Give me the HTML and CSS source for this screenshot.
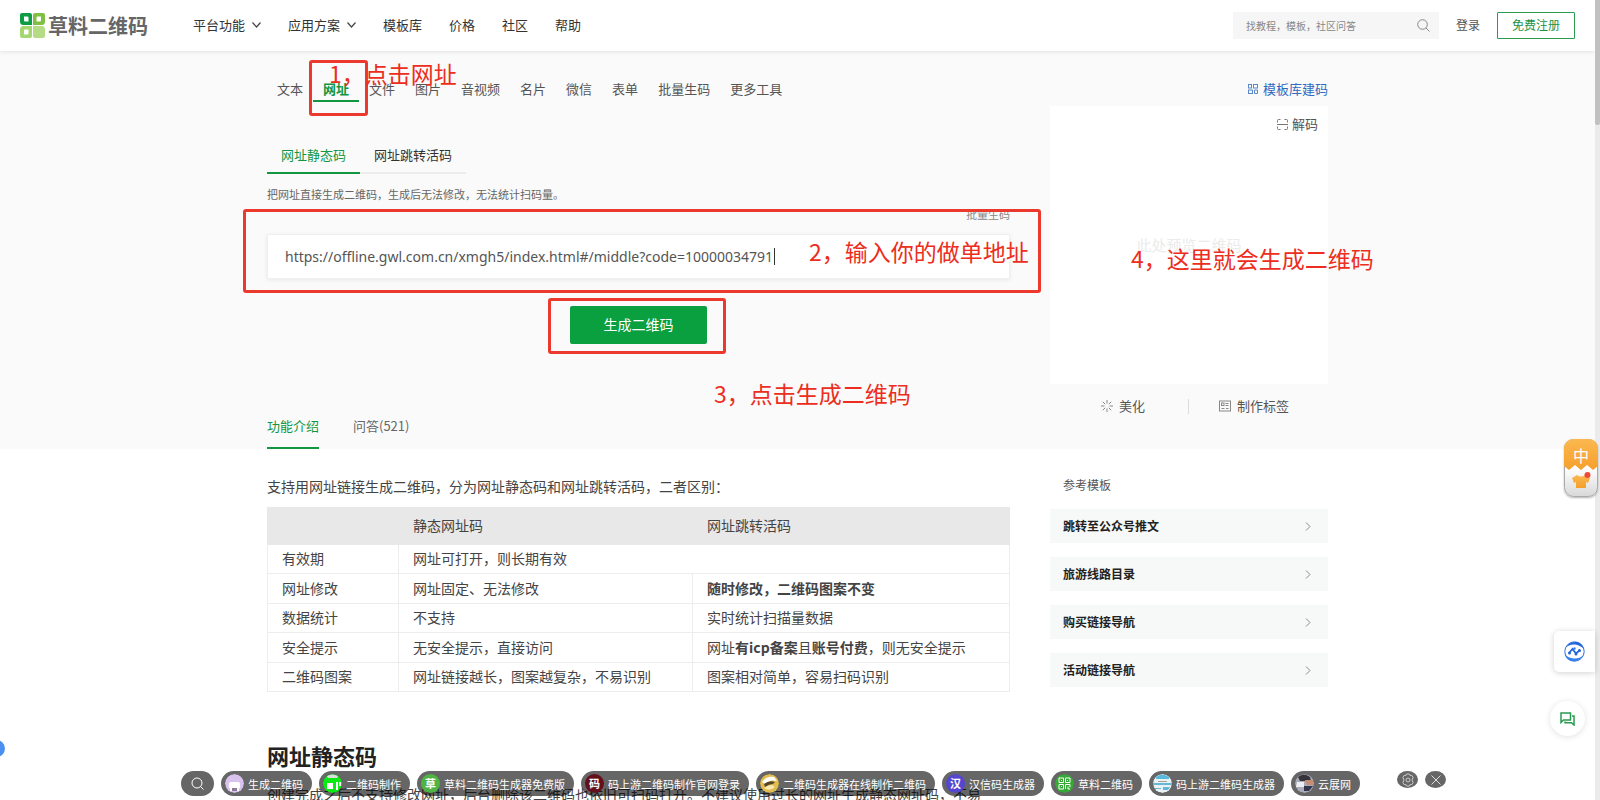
FILE: index.html
```html
<!DOCTYPE html>
<html lang="zh-CN">
<head>
<meta charset="utf-8">
<title>草料二维码</title>
<link rel="stylesheet" href="styles.css">
</head>
<body>
<header class="topbar">
  <a class="logo" href="#">
    <svg width="25" height="25" viewBox="0 0 25 25" aria-hidden="true">
      <path d="M2 0h8a2 2 0 0 1 2 2v10H3.500A3.500 3.500 0 0 1 0 8.500V2a2 2 0 0 1 2-2zM4 3.500v4a1 1 0 0 0 1 1h3.500v-4a1 1 0 0 0-1-1z" fill="#0c9c43" fill-rule="evenodd"/>
      <path d="M15 0h8a2 2 0 0 1 2 2v6.500a3.500 3.500 0 0 1-3.500 3.500H13V2a2 2 0 0 1 2-2zM17.500 3.500a1 1 0 0 0-1 1v4H20a1 1 0 0 0 1-1v-4z" fill="#7fbf42" fill-rule="evenodd"/>
      <path d="M3.500 13H12v10a2 2 0 0 1-2 2H2a2 2 0 0 1-2-2v-6.500A3.500 3.500 0 0 1 3.500 13zM5 16.500a1 1 0 0 0-1 1v4h3.500a1 1 0 0 0 1-1v-4z" fill="#a5d672" fill-rule="evenodd"/>
      <path d="M13 13h8.500a3.500 3.500 0 0 1 3.500 3.500V23a2 2 0 0 1-2 2h-8a2 2 0 0 1-2-2z" fill="#b5dc85"/>
    </svg>
    <span>草料二维码</span>
  </a>
  <nav class="mainnav">
    <a href="#">平台功能<svg width="9" height="6" viewBox="0 0 9 6"><path d="M.5.5l4 4.500 4-4.500" fill="none" stroke="#444" stroke-width="1.200"/></svg></a>
    <a href="#">应用方案<svg width="9" height="6" viewBox="0 0 9 6"><path d="M.5.5l4 4.500 4-4.500" fill="none" stroke="#444" stroke-width="1.200"/></svg></a>
    <a href="#">模板库</a>
    <a href="#">价格</a>
    <a href="#">社区</a>
    <a href="#">帮助</a>
  </nav>
  <div class="search">
    <input type="text" placeholder="找教程，模板，社区问答" aria-label="搜索">
    <svg width="13" height="13" viewBox="0 0 13 13"><circle cx="5.500" cy="5.500" r="4.800" fill="none" stroke="#888"/><path d="M9 9l3.500 3.500" stroke="#888"/></svg>
  </div>
  <a class="login" href="#">登录</a>
  <button class="register" type="button">免费注册</button>
</header>

<main>
  <section class="hero">
    <div class="wrap">
      <div class="left">
        <nav class="tabs">
          <a href="#">文本</a><a class="on" href="#">网址</a><a href="#">文件</a><a href="#">图片</a><a href="#">音视频</a><a href="#">名片</a><a href="#">微信</a><a href="#">表单</a><a href="#">批量生码</a><a href="#">更多工具</a>
        </nav>
        <nav class="subtabs">
          <a class="on" href="#">网址静态码</a><a href="#">网址跳转活码</a>
        </nav>
        <p class="hint">把网址直接生成二维码，生成后无法修改，无法统计扫码量。</p>
        <a class="batch" href="#">批量生码</a>
        <div class="urlbox">
          <input type="text" aria-label="网址" value="https://offline.gwl.com.cn/xmgh5/index.html#/middle?code=10000034791">
          <span class="caret"></span>
        </div>
        <button class="generate" type="button">生成二维码</button>
        <nav class="infotabs">
          <a class="on" href="#">功能介绍</a><a href="#">问答(521)</a>
        </nav>
      </div>
      <aside class="right">
        <a class="tpl" href="#">
          <svg width="10" height="10" viewBox="0 0 10 10" fill="none" stroke="#5c88c8"><rect x=".5" y=".5" width="3" height="3.500"/><rect x="5.500" y=".5" width="4" height="3.500"/><rect x=".5" y="6" width="4" height="3.500"/><path d="M6.500 6h3v3.500h-3z"/></svg>
          模板库建码
        </a>
        <div class="preview">
          <a class="decode" href="#">
            <svg width="11" height="11" viewBox="0 0 11 11" fill="none" stroke="#777"><path d="M3.500.5h-2a1 1 0 0 0-1 1v2M7.500.5h2a1 1 0 0 1 1 1v2M3.500 10.500h-2a1 1 0 0 1-1-1v-2M7.500 10.500h2a1 1 0 0 0 1-1v-2M0 5.500h11"/></svg>
            解码
          </a>
          <span class="ghost">此处预览二维码</span>
        </div>
        <div class="actions">
          <a href="#"><svg width="12" height="12" viewBox="0 0 12 12" stroke="#888"><path d="M6 0v3.500M6 8.500V12M0 6h3.500M8.500 6H12M1.800 1.800l2.400 2.400M7.800 7.800l2.400 2.400M10.200 1.800L7.800 4.200M4.200 7.800l-2.400 2.400"/></svg>美化</a>
          <span class="divider"></span>
          <a href="#"><svg width="12" height="12" viewBox="0 0 12 12" fill="none" stroke="#888"><rect x=".5" y="1" width="11" height="10"/><rect x="2.500" y="3" width="2.500" height="2.500"/><path d="M6.500 3.500h3M6.500 5.500h3M2.500 8.500h3M7 8.500h2.500"/></svg>制作标签</a>
        </div>
      </aside>

      <div class="mark mark-tab"></div>
      <div class="mark mark-url"></div>
      <div class="mark mark-btn"></div>
      <span class="note note-1">1，点击网址</span>
      <span class="note note-2">2，输入你的做单地址</span>
      <span class="note note-3">3，点击生成二维码</span>
      <span class="note note-4">4，这里就会生成二维码</span>
    </div>
  </section>

  <section class="wrap details">
    <div class="left">
      <p class="intro">支持用网址链接生成二维码，分为网址静态码和网址跳转活码，二者区别：</p>
      <table>
        <thead><tr><th></th><th>静态网址码</th><th>网址跳转活码</th></tr></thead>
        <tbody>
          <tr><td>有效期</td><td colspan="2">网址可打开，则长期有效</td></tr>
          <tr><td>网址修改</td><td>网址固定、无法修改</td><td><b>随时修改，二维码图案不变</b></td></tr>
          <tr><td>数据统计</td><td>不支持</td><td>实时统计扫描量数据</td></tr>
          <tr><td>安全提示</td><td>无安全提示，直接访问</td><td>网址<b>有icp备案</b>且<b>账号付费</b>，则无安全提示</td></tr>
          <tr><td>二维码图案</td><td>网址链接越长，图案越复杂，不易识别</td><td>图案相对简单，容易扫码识别</td></tr>
        </tbody>
      </table>
      <h2>网址静态码</h2>
      <p class="body">创建完成之后不支持修改网址，后台删除该二维码也依旧可扫码打开。不建议使用过长的网址生成静态网址码，不易</p>
    </div>
    <aside class="right refs">
      <h3>参考模板</h3>
      <a href="#">跳转至公众号推文<svg width="6" height="9" viewBox="0 0 6 9"><path d="M1 .5l4 4-4 4" fill="none" stroke="#888"/></svg></a>
      <a href="#">旅游线路目录<svg width="6" height="9" viewBox="0 0 6 9"><path d="M1 .5l4 4-4 4" fill="none" stroke="#888"/></svg></a>
      <a href="#">购买链接导航<svg width="6" height="9" viewBox="0 0 6 9"><path d="M1 .5l4 4-4 4" fill="none" stroke="#888"/></svg></a>
      <a href="#">活动链接导航<svg width="6" height="9" viewBox="0 0 6 9"><path d="M1 .5l4 4-4 4" fill="none" stroke="#888"/></svg></a>
    </aside>
  </section>
</main>

<div class="dock">
  <button class="find" type="button" aria-label="搜索"><svg width="13" height="13" viewBox="0 0 13 13" fill="none" stroke="#fff"><circle cx="6" cy="6" r="5"/><path d="M9.500 9.500l3 3"/></svg></button>
  <a href="#"><svg class="ico" viewBox="0 0 19 19"><circle cx="9.500" cy="9.500" r="9.500" fill="#d9c3ee"/><path d="M4 10q0-2 2-2h7q2 0 2 2v4H4z" fill="#fff"/><path d="M5 14h3v3H5zM11 14h3v3h-3z" fill="#fff"/><path d="M7 14h5v3H7z" fill="#8d7a9b"/></svg>生成二维码</a>
  <a href="#"><svg class="ico" viewBox="0 0 19 19"><circle cx="9.500" cy="9.500" r="9.500" fill="#0bea12"/><path d="M4 2Q9-1 15 2l-1 2H5z" fill="#ddd"/><path d="M4 9h6v6H4zM13 8h2v8h-2zM16 8h2v4h-2z" fill="#fff"/></svg>二维码制作</a>
  <a href="#"><span class="ico green">草</span>草料二维码生成器免费版</a>
  <a href="#"><span class="ico wine">码</span>码上游二维码制作官网登录</a>
  <a href="#"><svg class="ico" viewBox="0 0 19 19"><circle cx="9.500" cy="9.500" r="9.500" fill="#e2bd4d"/><path d="M2 8q4-6 12-5l3 4q-7-2-12 3z" fill="#fff"/><path d="M4 10q5-4 11-2l-2 2q-4 0-8 3z" fill="#54452a"/><path d="M4 14q5 4 11-1l-3-2q-4 0-8 3z" fill="#f6e9b4"/></svg>二维码生成器在线制作二维码</a>
  <a href="#"><span class="ico violet">汉</span>汉信码生成器</a>
  <a href="#"><svg class="ico" viewBox="0 0 19 19"><circle cx="9.500" cy="9.500" r="9.500" fill="#36a936"/><path d="M4 4h4.500v4.500H4zM10.500 4H15v4.500h-4.500zM4 10.500h4.500V15H4zM10.500 15v-4.500H15V13M13 12.500V15h2" fill="none" stroke="#fff"/><path d="M6 6h1v1H6zM12 6h1v1h-1zM6 12h1v1H6z" fill="#fff"/></svg>草料二维码</a>
  <a href="#"><svg class="ico" viewBox="0 0 19 19"><circle cx="9.500" cy="9.500" r="9.500" fill="#e9f2f5"/><path d="M3 3q6-5 13 0v2H3z" fill="#59b8dc"/><path d="M0 9h19v2H0zM2 14h6v1H2zM10 13h7l-2 3h-5z" fill="#66b7d5"/><path d="M5 7h9v1H5z" fill="#a9a28f"/></svg>码上游二维码生成器</a>
  <a href="#"><svg class="ico" viewBox="0 0 19 19"><circle cx="9.500" cy="9.500" r="9.500" fill="#a9abb8"/><path d="M3 3q6-5 12 0l1 4H5z" fill="#37333a"/><path d="M10 6h8v5h-6z" fill="#c58d73"/><path d="M2 8h7v5H1z" fill="#eceef4"/><path d="M9 12h9l-4 5H9z" fill="#35364d"/></svg>云展网</a>
</div>
<div class="dock-tools">
  <button type="button" aria-label="设置"><svg width="14" height="14" viewBox="0 0 14 14" fill="none" stroke="#ccc"><path d="M5.500 1h3l.6 1.600 1.700-.3 1.500 2.500L11.200 6v2l1.100 1.200-1.500 2.500-1.700-.3-.6 1.600h-3l-.6-1.600-1.700.3-1.500-2.500L2.800 8V6L1.700 4.800l1.500-2.500 1.700.3z"/><circle cx="7" cy="7" r="2"/></svg></button>
  <button type="button" aria-label="关闭"><svg width="12" height="12" viewBox="0 0 12 12" stroke="#ddd"><path d="M1.500 1.500l9 9M10.500 1.500l-9 9"/></svg></button>
</div>

<span class="edge-dot"></span>
<div class="scrollbar"><span></span></div>
<div class="assist">
  <svg width="21" height="21" viewBox="0 0 21 21"><circle cx="10.500" cy="10.500" r="9.700" fill="#fff" stroke="#2b6fe0"/><path d="M1.500 7Q5 0 13 1q5 1 7 7-4-4-9-4.500Q5 3 1.500 7z" fill="#2467dc"/><path d="M19.500 14q-4 7-12 6-5-1-7-7 4 4 9 4.500 6 .5 10-3.500z" fill="#3480ee"/><path d="M5 12l3.500-4 3.500 4.500 4-3.500" fill="none" stroke="#2467dc" stroke-width="1.800"/><circle cx="5.500" cy="12" r="1.500" fill="#2467dc"/><circle cx="12" cy="13" r="1.500" fill="#2467dc"/><circle cx="15.500" cy="9.500" r="1.500" fill="#2467dc"/><circle cx="10.500" cy="7.500" r="1.200" fill="#3480ee"/></svg>
</div>
<button class="chat" type="button" aria-label="在线咨询">
  <svg width="15" height="14" viewBox="0 0 15 14" fill="none" stroke="#2a9a50" stroke-width="1.500"><path d="M1 1h9.500v7H3.500L1 10.500z"/><path d="M12 4h2v9l-2.500-2.200H5V9.500"/></svg>
</button>
<div class="ime">
  <svg width="34" height="58" viewBox="0 0 34 58"><defs><linearGradient id="o" x1="0" y1="0" x2="0" y2="1"><stop offset="0" stop-color="#fbb850"/><stop offset="1" stop-color="#f5a02c"/></linearGradient><linearGradient id="g" x1="0" y1="0" x2="0" y2="1"><stop offset=".5" stop-color="#fff"/><stop offset="1" stop-color="#d8d8d8"/></linearGradient></defs><rect x=".5" y=".5" width="33" height="57" rx="9" fill="url(#g)" stroke="#aaa"/><path d="M0 27V9a9 9 0 0 1 9-9h16a9 9 0 0 1 9 9v18l-5 4-6-5-6 5-6-5-6 5z" fill="url(#o)"/><path d="M13 36q4 3 8 0l5 3-2 5-2-1v6H12v-6l-2 1-2-5z" fill="url(#o)"/><circle cx="23.500" cy="36" r="3" fill="#ee4a3c"/></svg>
  <span>中</span>
</div>
</body>
</html>
```
FILE: styles.css
```css
* { box-sizing: border-box; }
html, body { height: 100%; }
body {
  margin: 0;
  padding-right: 5px;
  overflow: hidden;
  position: relative;
  background: #fff;
  color: #444;
  font: 13px/20px "Noto Sans CJK SC", sans-serif;
}
a { color: inherit; text-decoration: none; }
p, h2, h3 { margin: 0; }
button, input { font-family: inherit; }
button { padding: 0; border: 0; cursor: pointer; }
svg { flex: none; }

/* Header */
.topbar {
  position: relative;
  display: flex;
  align-items: center;
  height: 51px;
  padding: 0 20px;
  background: #fff;
  box-shadow: 0 1px 4px rgba(0, 0, 0, .1);
}
.logo { display: flex; align-items: center; gap: 3px; color: #666; font-size: 20px; font-weight: 700; }
.mainnav { display: flex; gap: 27px; margin-left: 45px; padding-bottom: 2px; color: #333; }
.mainnav a { display: flex; align-items: center; gap: 7px; }
.search {
  display: flex;
  align-items: center;
  width: 206px;
  height: 27px;
  margin-left: auto;
  padding: 0 9px 0 13px;
  background: #f6f6f6;
}
.search input { flex: 1; min-width: 0; padding: 0; border: 0; background: none; font-size: 10px; outline: 0; }
.search input::placeholder { color: #888; }
.login { margin: 0 17px; padding-bottom: 2px; font-size: 12px; color: #555; }
.register { width: 78px; height: 27px; padding-bottom: 2px; border: 1px solid #2a9a50; border-radius: 1px; background: #fff; color: #1b9345; font-size: 12px; }

/* Shared columns */
.wrap { position: relative; display: flex; gap: 40px; max-width: 1061px; margin: 0 auto; }
.left { flex: 1; min-width: 0; }
.right { flex: 0 0 278px; }

/* Generator */
.hero { background: #fafafa; }
.hero .wrap { padding-top: 28px; }
.tabs, .subtabs, .infotabs { display: flex; }
.tabs a { padding: 0 10px 1px; border-bottom: 2px solid transparent; color: #555; }
.tabs .on { color: #12963f; border-color: #12963f; font-weight: 700; }
.subtabs { margin-top: 37px; }
.subtabs a { padding: 0 14px 2px; line-height: 31px; border-bottom: 2px solid #ececec; color: #333; }
.subtabs .on { color: #12963f; border-color: #12963f; }
.hint { margin-top: 12px; font-size: 11px; line-height: 16px; color: #666; }
.batch { display: block; width: fit-content; margin: 4px 0 0 auto; font-size: 11px; line-height: 16px; color: #888; }
.urlbox { position: relative; margin-top: 12px; }
.urlbox input {
  display: block;
  width: 100%;
  height: 45px;
  padding: 0 17px;
  border: 1px solid #f0f0f0;
  background: #fff;
  box-shadow: 0 1px 4px rgba(0, 0, 0, .08);
  color: #555;
  font: 14px "Noto Sans", sans-serif;
  outline: 0;
}
.caret { position: absolute; left: 507px; top: 14px; width: 1px; height: 17px; background: #333; }
.generate { display: block; width: 137px; height: 38px; margin: 27px auto 0; padding-bottom: 2px; border-radius: 2px; background: #0aa03f; color: #fff; font-size: 14px; }
.infotabs { gap: 34px; margin-top: 72px; color: #666; }
.infotabs a { padding-bottom: 11px; border-bottom: 2px solid transparent; }
.infotabs .on { color: #12963f; border-color: #12963f; }

.tpl { display: flex; align-items: center; justify-content: flex-end; gap: 5px; color: #2f6bc0; }
.preview { position: relative; height: 278px; margin-top: 7px; padding: 8px 10px; background: #fff; border-radius: 2px; }
.decode { display: flex; align-items: center; justify-content: flex-end; gap: 4px; color: #555; }
.ghost { position: absolute; top: 129px; left: 0; right: 0; text-align: center; font-size: 15px; color: #ebebeb; }
.actions { display: flex; align-items: center; justify-content: center; margin-top: 12px; padding-left: 12px; color: #555; }
.actions a { display: flex; align-items: center; gap: 6px; }
.divider { width: 1px; height: 15px; margin: 0 30px 0 43px; background: #ddd; }

/* Step annotations over the generator */
.mark { position: absolute; border: 3px solid #ec392d; border-radius: 3px; }
.mark-tab { left: 42px; top: 9px; width: 59px; height: 56px; }
.mark-url { left: -24px; top: 158px; width: 798px; height: 84px; }
.mark-btn { left: 281px; top: 247px; width: 178px; height: 56px; }
.note { position: absolute; color: #ec2d20; font-size: 23px; line-height: 32px; white-space: nowrap; }
.note-1 { left: 62px; top: 6px; }
.note-2 { left: 542px; top: 184px; }
.note-3 { left: 447px; top: 326px; }
.note-4 { left: 864px; top: 191px; }

/* Details */
.details .left { padding-top: 25px; }
.intro, .body { font-size: 14px; line-height: 24px; white-space: nowrap; }
table { width: 100%; margin-top: 9px; border-collapse: collapse; table-layout: fixed; font-size: 14px; line-height: 20px; }
th, td { padding: 0 14px 2px; border: 1px solid #ededed; text-align: left; }
th { height: 37px; border-color: #e8e8e8; background: #e8e8e8; font-weight: 400; }
th:first-child { width: 131px; }
th:nth-child(2) { width: 294px; }
td { height: 29px; }
tr:nth-child(even) td { height: 30px; }
h2 { margin-top: 48px; font-size: 22px; line-height: 30px; color: #222; }
.body { margin-top: 12px; }

.refs { padding-top: 26px; font-size: 12px; }
.refs h3 { margin-bottom: 14px; padding-left: 13px; font-size: 12px; font-weight: 400; color: #555; }
.refs a { display: flex; align-items: center; justify-content: space-between; height: 34px; margin-bottom: 14px; padding: 0 17px 0 13px; background: #f6f9f7; color: #222; font-weight: 700; }

/* Floating shortcuts */
.dock { position: absolute; left: 181px; bottom: 4px; display: flex; gap: 7px; }
.dock a, .find { display: flex; align-items: center; height: 25px; border-radius: 13px; background: rgba(0, 0, 0, .6); color: #fff; font-size: 11px; white-space: nowrap; }
.dock a { gap: 4px; padding: 0 9px 0 4px; }
.find { width: 33px; justify-content: center; }
.ico { display: block; width: 19px; height: 19px; border-radius: 50%; font-weight: 700; line-height: 19px; text-align: center; }
.green { background: #4fb443; }
.wine { background: #64101c; }
.violet { background: #5546d0; }
.dock-tools { position: absolute; right: 154px; bottom: 12px; display: flex; gap: 7px; }
.dock-tools button { display: flex; align-items: center; justify-content: center; width: 21px; height: 17px; border-radius: 50%; background: #666; }

.edge-dot { position: absolute; left: -12px; top: 740px; width: 17px; height: 17px; border-radius: 50%; background: #4a90f0; }
.scrollbar { position: absolute; top: 0; right: 0; bottom: 0; width: 5px; background: #ebebeb; }
.scrollbar span { display: block; height: 125px; border-radius: 0 0 2px 2px; background: #c1c1c1; }
.assist { position: absolute; right: 5px; top: 631px; display: flex; align-items: center; justify-content: center; width: 41px; height: 41px; border-radius: 5px 0 0 5px; background: #fff; box-shadow: 0 1px 6px rgba(0, 0, 0, .18); }
.chat { position: absolute; right: 15px; top: 701px; display: flex; align-items: center; justify-content: center; width: 35px; height: 35px; border-radius: 50%; background: #fff; box-shadow: 0 1px 6px rgba(0, 0, 0, .12); }
.ime { position: absolute; right: 2px; top: 439px; width: 34px; height: 58px; border-radius: 9px; box-shadow: 0 1px 2px rgba(0, 0, 0, .3); }
.ime span { position: absolute; left: 0; right: 0; top: 6px; text-align: center; color: #fff; font-size: 16px; font-weight: 400; }
```
